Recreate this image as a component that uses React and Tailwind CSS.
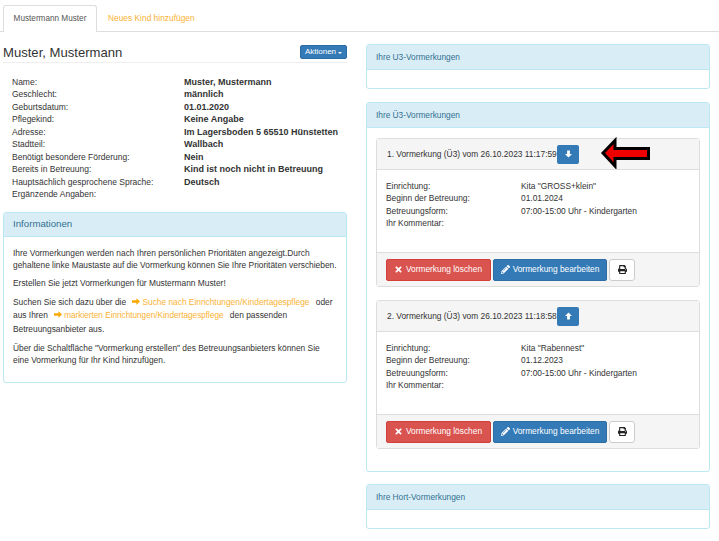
import React from 'react';
import { FaTimes, FaPencilAlt, FaPrint } from 'react-icons/fa';

const childRows = [
    ['Name:', 'Muster, Mustermann'],
    ['Geschlecht:', 'männlich'],
    ['Geburtsdatum:', '01.01.2020'],
    ['Pflegekind:', 'Keine Angabe'],
    ['Adresse:', 'Im Lagersboden 5 65510 Hünstetten'],
    ['Stadtteil:', 'Wallbach'],
    ['Benötigt besondere Förderung:', 'Nein'],
    ['Bereits in Betreuung:', 'Kind ist noch nicht in Betreuung'],
    ['Hauptsächlich gesprochene Sprache:', 'Deutsch'],
    ['Ergänzende Angaben:', ''],
];

function BlockArrow({ up = false, className = '' }) {
    return (
        <svg className={className} viewBox="0 0 10 10" fill="currentColor">
            <path d={up ? 'M3 10h4V5h3L5 0 0 5h3z' : 'M3 0h4v5h3l-5 5-5-5h3z'} />
        </svg>
    );
}

function Panel({ title, className = '', children }) {
    return (
        <div className={`rounded-[3px] border border-[#bce8f1] bg-white ${className}`}>
            <div className="flex h-[25px] items-center border-b border-[#bce8f1] bg-[#d9edf7] px-[9px] pt-[1px] text-[8.3px] text-[#31708f]">{title}</div>
            {children}
        </div>
    );
}

function Vormerkung({ title, up, kita, beginn }) {
    return (
        <div className="rounded-[3px] border border-[#ddd] bg-white">
            <div className="flex h-[31px] items-center border-b border-[#ddd] bg-[#f5f5f5] pl-[10px]">
                <span className="w-[169px] whitespace-nowrap text-[8.4px]">{title}</span>
                <span className="ml-[1px] flex h-[19px] w-[22px] items-center justify-center rounded-[2px] bg-[#337ab7] text-white">
                    <BlockArrow up={up} className="h-[8px] w-[7px]" />
                </span>
            </div>
            <div className="h-[82px] px-[9px] pt-[10px] text-[8.4px] leading-[12.4px]">
                <div className="grid grid-cols-[135px_1fr]">
                    <span>Einrichtung:</span><span>{kita}</span>
                    <span>Beginn der Betreuung:</span><span>{beginn}</span>
                    <span>Betreuungsform:</span><span>07:00-15:00 Uhr - Kindergarten</span>
                    <span>Ihr Kommentar:</span><span></span>
                </div>
            </div>
            <div className="flex h-[34px] items-center gap-[2px] border-t border-[#ddd] bg-[#f5f5f5] pl-[9px]">
                <button className="flex h-[22px] w-[105px] items-center justify-center gap-[3px] rounded-[2px] border border-[#d43f3a] bg-[#d9534f] pr-[1px] text-[8.35px] text-white">
                    <FaTimes className="h-[9px] w-[9px]" /> Vormerkung löschen
                </button>
                <button className="flex h-[22px] w-[114px] items-center justify-center gap-[3px] rounded-[2px] border border-[#2e6da4] bg-[#337ab7] text-[8.35px] text-white">
                    <FaPencilAlt className="h-[9px] w-[9px]" /> Vormerkung bearbeiten
                </button>
                <button className="flex h-[22px] w-[26px] items-center justify-center rounded-[3px] border border-[#ccc] bg-white text-[#222]">
                    <FaPrint className="h-[9px] w-[9px]" />
                </button>
            </div>
        </div>
    );
}

function OrangeArrow() {
    return (
        <svg className="mr-[2px] ml-[4px] inline h-[7px] w-[8px] align-baseline text-[#f9a800]" viewBox="0 0 10 10" fill="currentColor" preserveAspectRatio="none">
            <path d="M0 3.2h5.5V0.5L10 5 5.5 9.5V6.8H0z" />
        </svg>
    );
}

export default function App() {
    return (
        <div className="relative h-[541px] w-[719px] overflow-hidden bg-white font-['Liberation_Sans',Arial,sans-serif] text-[#333]">
            <div className="flex h-[32px] items-end border-b border-[#ddd] pt-[5px]">
                <div className="mb-[-1px] ml-[3px] flex h-[27px] w-[94px] items-center justify-center rounded-t-[3px] border border-b-0 border-[#ddd] bg-white text-[8.2px] text-[#555]">
                    Mustermann Muster
                </div>
                <div className="ml-[11px] flex h-[26px] items-center text-[8.4px] text-[#f9b233]">Neues Kind hinzufügen</div>
            </div>

            <div className="flex items-start">
                <div className="ml-[3px] w-[344px]">
                    <div className="flex h-[31px] items-end justify-between border-b border-[#eee]">
                        <h1 className="text-[13.1px] leading-[18px]">Muster, Mustermann</h1>
                        <button className="mb-[3px] flex h-[14px] w-[47px] items-center justify-center gap-[2px] rounded-[2px] border border-[#2e6da4] bg-[#337ab7] text-[8px] text-white">
                            Aktionen
                            <span className="mt-[1px] border-x-[2px] border-t-[2px] border-x-transparent border-t-white"></span>
                        </button>
                    </div>

                    <div className="mt-[13px] grid grid-cols-[172px_1fr] pl-[9px] text-[8.5px] leading-[12.45px]">
                        {childRows.map(([label, value]) => (
                            <React.Fragment key={label}>
                                <span>{label}</span>
                                <span className="text-[9px] font-bold">{value}</span>
                            </React.Fragment>
                        ))}
                    </div>

                    <div className="mt-[11px] rounded-[3px] border border-[#bce8f1] bg-white">
                        <div className="flex h-[24px] items-center border-b border-[#bce8f1] bg-[#d9edf7] px-[9px] text-[9.7px] text-[#31708f]">Informationen</div>
                        <div className="h-[145px] px-[9px] pt-[10px] text-[8.4px] leading-[12.4px]">
                            <p>Ihre Vormerkungen werden nach Ihren persönlichen Prioritäten angezeigt.Durch gehaltene linke Maustaste auf die Vormerkung können Sie Ihre Prioritäten verschieben.</p>
                            <p className="mt-[6px]">Erstellen Sie jetzt Vormerkungen für Mustermann Muster!</p>
                            <p className="mt-[6px] leading-[13.7px]">
                                Suchen Sie sich dazu über die <OrangeArrow /><span className="mr-[4px] whitespace-nowrap text-[8.35px] text-[#f9b233]">Suche nach Einrichtungen/Kindertagespflege</span> oder<br />
                                aus Ihren <OrangeArrow /><span className="mr-[4px] whitespace-nowrap text-[8.2px] text-[#f9b233]">markierten Einrichtungen/Kindertagespflege</span> den passenden<br />
                                Betreuungsanbieter aus.
                            </p>
                            <p className="mt-[5px]">Über die Schaltfläche "Vormerkung erstellen" des Betreuungsanbieters können Sie eine Vormerkung für Ihr Kind hinzufügen.</p>
                        </div>
                    </div>
                </div>

                <div className="ml-[19px] mt-[12px] w-[344px]">
                    <Panel title="Ihre U3-Vormerkungen">
                        <div className="h-[18px]"></div>
                    </Panel>
                    <Panel title="Ihre Ü3-Vormerkungen" className="mt-[13px]">
                        <div className="flex flex-col gap-[13px] px-[9px] pt-[10px] pb-[22px]">
                            <Vormerkung title="1. Vormerkung (Ü3) vom 26.10.2023 11:17:59" kita={'Kita "GROSS+klein"'} beginn="01.01.2024" />
                            <Vormerkung title="2. Vormerkung (Ü3) vom 26.10.2023 11:18:58" up kita={'Kita "Rabennest"'} beginn="01.12.2023" />
                        </div>
                    </Panel>
                    <Panel title="Ihre Hort-Vormerkungen" className="mt-[12px]">
                        <div className="h-[18px]"></div>
                    </Panel>
                </div>
            </div>

            {/* red marker drawn over the card header */}
            <svg className="absolute left-[600px] top-[137px]" width="52" height="32" viewBox="0 0 52 32">
                <path d="M3 16 L15 3.5 L15 11.5 L48.5 11.5 L48.5 21.5 L15 21.5 L15 29 Z" fill="#ee0000" stroke="#000" strokeWidth="3" />
            </svg>
        </div>
    );
}
